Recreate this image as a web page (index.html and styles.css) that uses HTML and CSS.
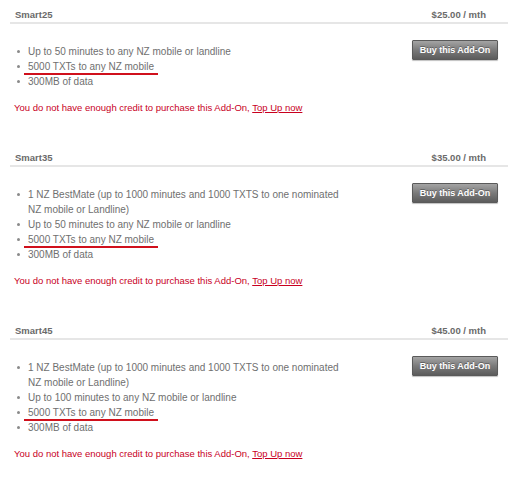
FILE: index.html
```html
<!DOCTYPE html>
<html>
<head>
<meta charset="utf-8">
<link rel="stylesheet" href="styles.css">
</head>
<body>
<div class="page">
  <section class="addon">
    <header class="addon-head">
      <span class="addon-name">Smart25</span>
      <span class="addon-price">$25.00 / mth</span>
    </header>
    <div class="addon-body">
      <ul class="features">
        <li>Up to 50 minutes to any NZ mobile or landline</li>
        <li><span class="mark">5000 TXTs to any NZ mobile</span></li>
        <li>300MB of data</li>
      </ul>
      <button class="buy">Buy this Add-On</button>
    </div>
    <p class="warning">You do not have enough credit to purchase this Add-On, <a href="#">Top Up now</a></p>
  </section>

  <section class="addon">
    <header class="addon-head">
      <span class="addon-name">Smart35</span>
      <span class="addon-price">$35.00 / mth</span>
    </header>
    <div class="addon-body">
      <ul class="features">
        <li>1 NZ BestMate (up to 1000 minutes and 1000 TXTS to one nominated NZ mobile or Landline)</li>
        <li>Up to 50 minutes to any NZ mobile or landline</li>
        <li><span class="mark">5000 TXTs to any NZ mobile</span></li>
        <li>300MB of data</li>
      </ul>
      <button class="buy">Buy this Add-On</button>
    </div>
    <p class="warning">You do not have enough credit to purchase this Add-On, <a href="#">Top Up now</a></p>
  </section>

  <section class="addon">
    <header class="addon-head">
      <span class="addon-name">Smart45</span>
      <span class="addon-price">$45.00 / mth</span>
    </header>
    <div class="addon-body">
      <ul class="features">
        <li>1 NZ BestMate (up to 1000 minutes and 1000 TXTS to one nominated NZ mobile or Landline)</li>
        <li>Up to 100 minutes to any NZ mobile or landline</li>
        <li><span class="mark">5000 TXTs to any NZ mobile</span></li>
        <li>300MB of data</li>
      </ul>
      <button class="buy">Buy this Add-On</button>
    </div>
    <p class="warning">You do not have enough credit to purchase this Add-On, <a href="#">Top Up now</a></p>
  </section>
</div>
</body>
</html>
```
FILE: styles.css
```css
html, body {
  margin: 0;
  padding: 0;
  background: #ffffff;
}

body {
  font-family: "Liberation Sans", Arial, sans-serif;
  color: #666666;
}

.page {
  width: 498px;
  margin-left: 10px;
}

.addon {
  margin-bottom: 29px;
}

.addon-head {
  display: flex;
  justify-content: space-between;
  align-items: center;
  padding: 9px 22px 1px 5px;
  line-height: 12px;
  border-bottom: 2px solid #e6e6e6;
  font-weight: bold;
  font-size: 9.5px;
  color: #6a6a6a;
}

.addon-body {
  display: flex;
  justify-content: space-between;
  align-items: flex-start;
}

.features {
  list-style: none;
  margin: 20px 0 0 0;
  padding: 0 0 0 18px;
  width: 322px;
  font-size: 10px;
  line-height: 15px;
  color: #6f6f6f;
}

.features li {
  position: relative;
}

.features li::before {
  content: "";
  position: absolute;
  left: -11px;
  top: 6px;
  width: 3px;
  height: 3px;
  border-radius: 50%;
  background: #8a8a8a;
}

.mark {
  position: relative;
}

.mark::after {
  content: "";
  position: absolute;
  left: -4px;
  right: -4px;
  bottom: -3px;
  height: 2px;
  background: #d0101c;
}

.buy {
  margin: 16px 10px 0 0;
  width: 86px;
  height: 20px;
  padding: 0;
  border: 1px solid #5a5a5a;
  border-radius: 1px;
  background: linear-gradient(#a4a4a4, #7a7a7a 50%, #5c5c5c);
  color: #ffffff;
  font-family: "Liberation Sans", Arial, sans-serif;
  font-weight: bold;
  font-size: 9px;
  text-shadow: 0 -1px 0 rgba(0,0,0,0.3);
  box-shadow: 0 1px 1px rgba(0,0,0,0.25);
}

.warning {
  margin: 13px 0 0 4px;
  font-size: 9.5px;
  line-height: 12px;
  color: #c8001e;
}

.warning a {
  color: #c8001e;
  text-decoration: underline;
}
```
